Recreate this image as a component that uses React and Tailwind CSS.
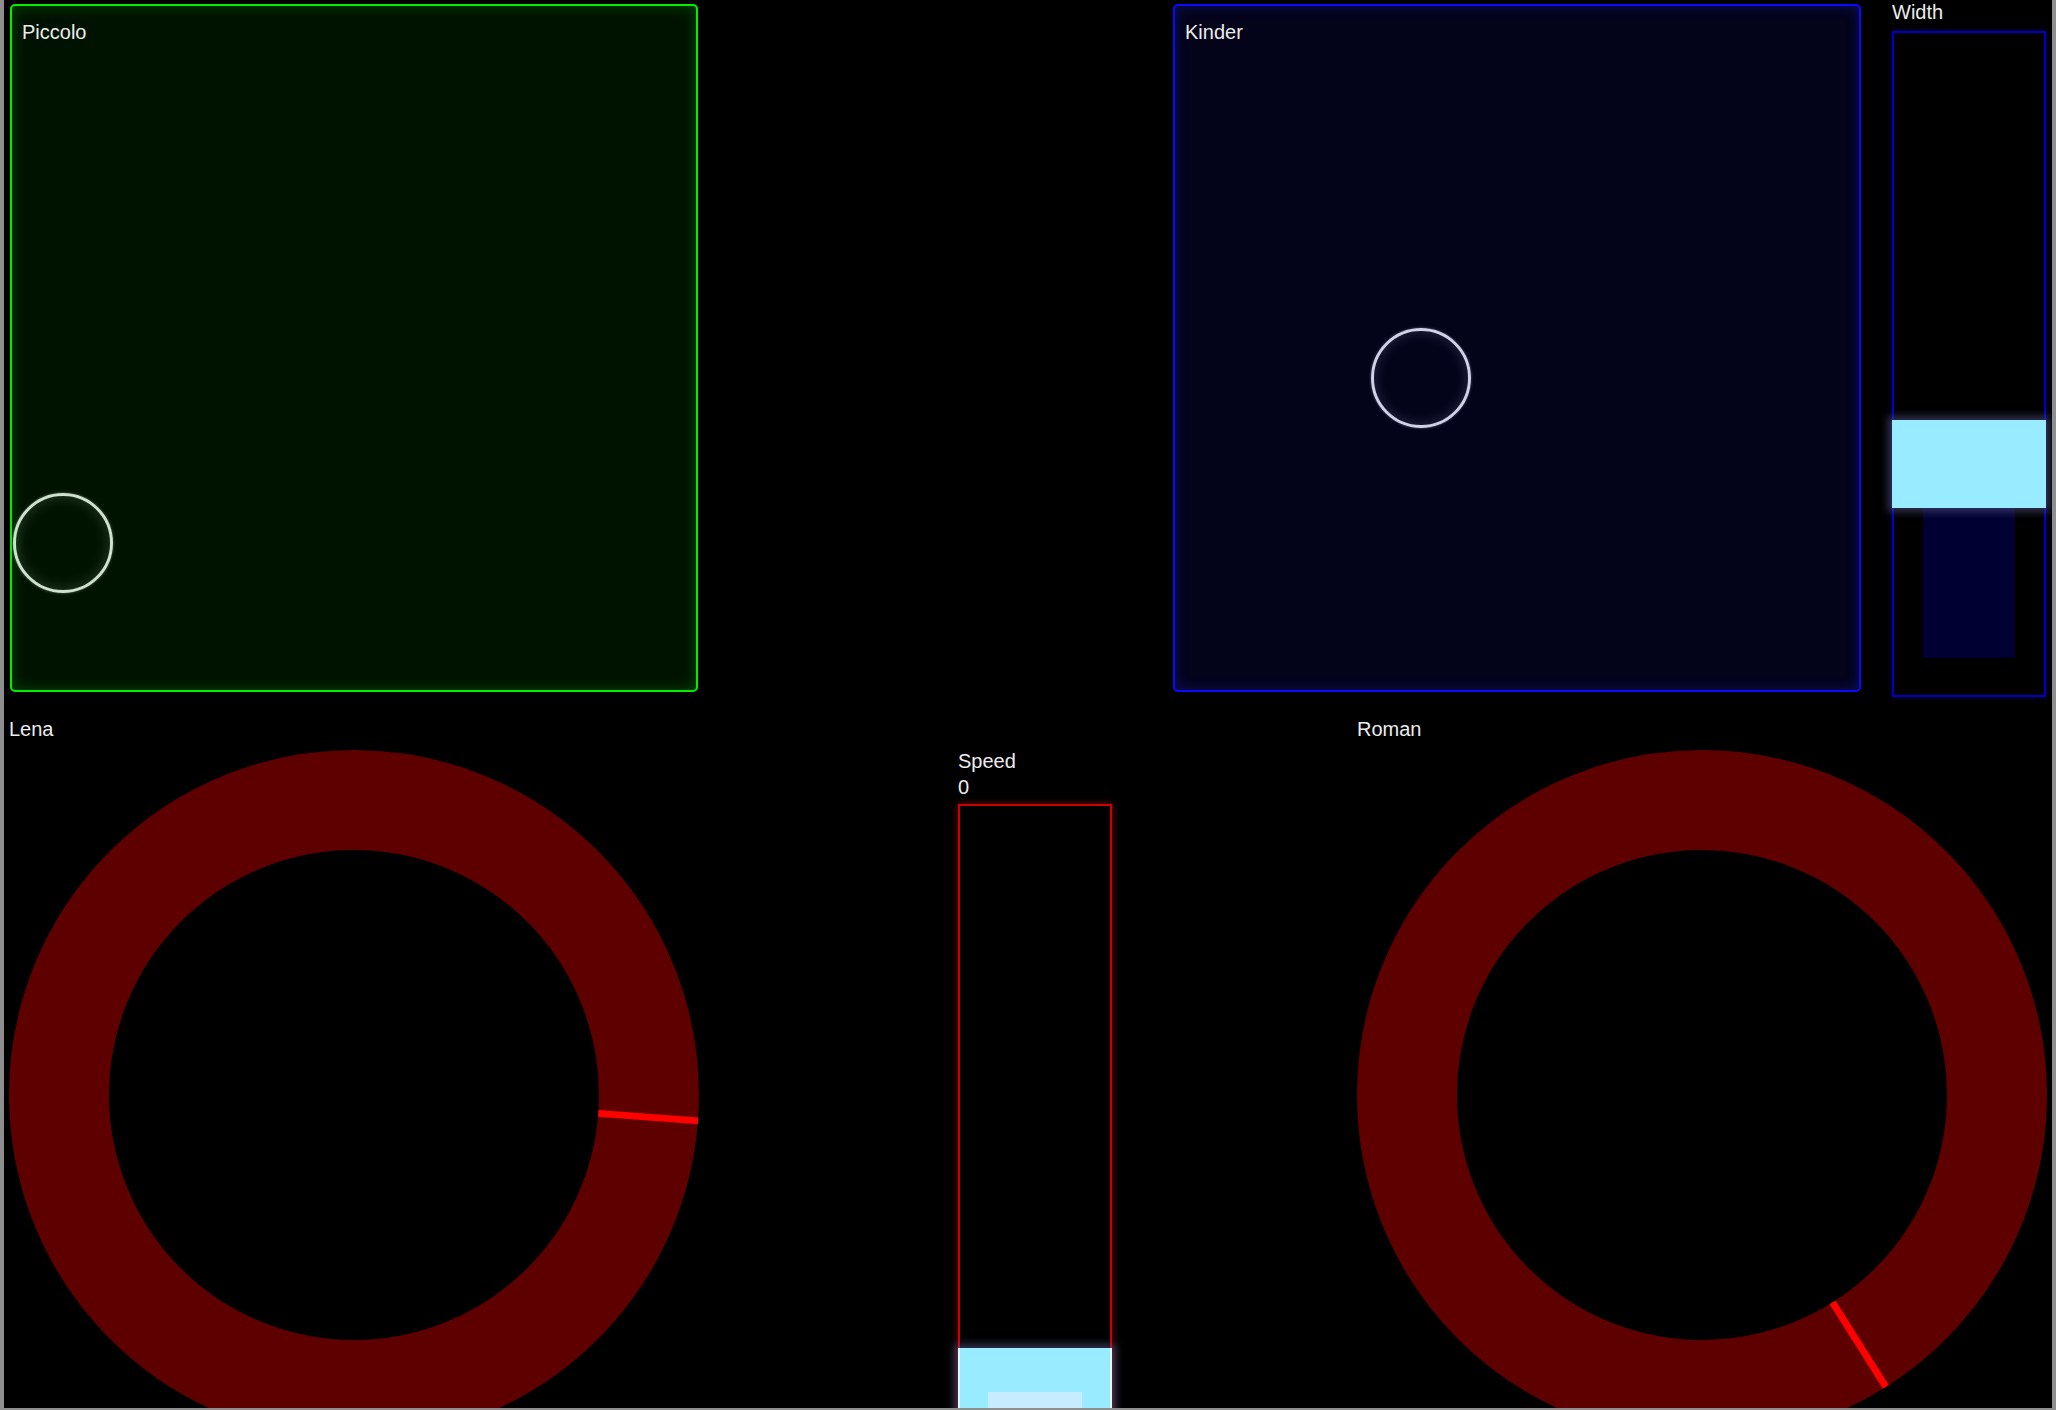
import React from 'react';

const font = { fontFamily: '"Liberation Sans", Arial, sans-serif' };

function Knob({ label, angle }) {
    // ring drawn as svg, indicator is a radial line at angle (deg, clockwise from 3 o'clock)
    const a = (angle * Math.PI) / 180;
    const c = 345;
    const x1 = c + 245 * Math.cos(a);
    const y1 = c + 245 * Math.sin(a);
    const x2 = c + 345 * Math.cos(a);
    const y2 = c + 345 * Math.sin(a);

    return (
        <div className="w-[690px] shrink-0 flex flex-col">
            <p className="text-[20px] leading-[23px] text-[#ececec]">{label}</p>
            <svg className="mt-[9px] shrink-0" width="690" height="690" viewBox="0 0 690 690">
                <circle cx={c} cy={c} r="295" fill="none" stroke="#5f0000" strokeWidth="100" />
                <line x1={x1} y1={y1} x2={x2} y2={y2} stroke="#ff0000" strokeWidth="7" />
            </svg>
        </div>
    );
}

export default function App() {
    return (
        <div
            className="w-[2056px] h-[1410px] overflow-hidden bg-black border-l-4 border-r-4 border-b-2 border-[#8e8e8e] flex flex-col"
            style={font}
        >
            {/* Top row */}
            <div className="flex items-start h-[695px] shrink-0">
                {/* Piccolo XY pad */}
                <div className="relative ml-[6px] mt-[4px] w-[688px] h-[688px] shrink-0 rounded-[5px] border-2 border-[#00ee00] bg-[#001300] shadow-[inset_0_0_14px_rgba(0,200,0,0.3)] pl-[10px] pt-[15px]">
                    <p className="text-[20px] leading-[23px] text-[#ececec]">Piccolo</p>
                    <div className="absolute left-[1px] top-[487px] w-[100px] h-[100px] rounded-full border-[3px] border-[#cfe0cf] shadow-[inset_0_0_14px_rgba(220,255,220,0.18),0_0_3px_rgba(220,255,220,0.4)]" />
                </div>

                {/* Kinder XY pad */}
                <div className="relative ml-[475px] mt-[4px] w-[688px] h-[688px] shrink-0 rounded-[5px] border-2 border-[#0a0aff] bg-[#03031a] shadow-[inset_0_0_14px_rgba(40,40,255,0.3)] pl-[10px] pt-[15px]">
                    <p className="text-[20px] leading-[23px] text-[#ececec]">Kinder</p>
                    <div className="absolute left-[196px] top-[322px] w-[100px] h-[100px] rounded-full border-[3px] border-[#d0d0e6] shadow-[inset_0_0_14px_rgba(220,220,255,0.18),0_0_3px_rgba(220,220,255,0.4)]" />
                </div>

                {/* Width fader */}
                <div className="ml-[31px] w-[154px] shrink-0 flex flex-col">
                    <p className="text-[20px] leading-[23px] mt-[1px] text-[#ececec]">Width</p>
                    <div className="mt-[7px] h-[666px] border-2 border-[#0000c4] shadow-[0_0_6px_rgba(0,0,200,0.35)] flex flex-col">
                        <div className="h-[387px] shrink-0" />
                        <div className="relative z-10 -mx-[2px] h-[88px] shrink-0 bg-[#99ebff] shadow-[0_0_8px_4px_rgba(90,90,140,0.55)]" />
                        <div className="mx-auto w-[92px] h-[150px] shrink-0 bg-[#000033]" />
                    </div>
                </div>
            </div>

            {/* Bottom row */}
            <div className="flex items-start mt-[23px]">
                <div className="ml-[5px]">
                    <Knob label="Lena" angle={4.3} />
                </div>

                {/* Speed fader */}
                <div className="ml-[259px] w-[154px] shrink-0 flex flex-col mt-[30px]">
                    <p className="text-[20px] leading-[26px] text-[#ececec]">Speed</p>
                    <p className="text-[20px] leading-[26px] text-[#ececec]">0</p>
                    <div className="mt-[4px] h-[640px] border-2 border-b-0 border-[#cc0000] shadow-[0_0_7px_rgba(255,0,0,0.45)] flex flex-col">
                        <div className="h-[542px] shrink-0" />
                        <div className="relative z-10 -mx-[2px] h-[100px] shrink-0 bg-[#99ebff] border-x-2 border-[#e4f8ff] shadow-[0_0_8px_4px_rgba(90,90,140,0.55)] flex flex-col items-center">
                            <div className="h-[44px] shrink-0" />
                            <div className="w-[94px] h-[40px] bg-[#c8ecff]" />
                        </div>
                    </div>
                </div>

                <div className="ml-[245px]">
                    <Knob label="Roman" angle={57.8} />
                </div>
            </div>
        </div>
    );
}
